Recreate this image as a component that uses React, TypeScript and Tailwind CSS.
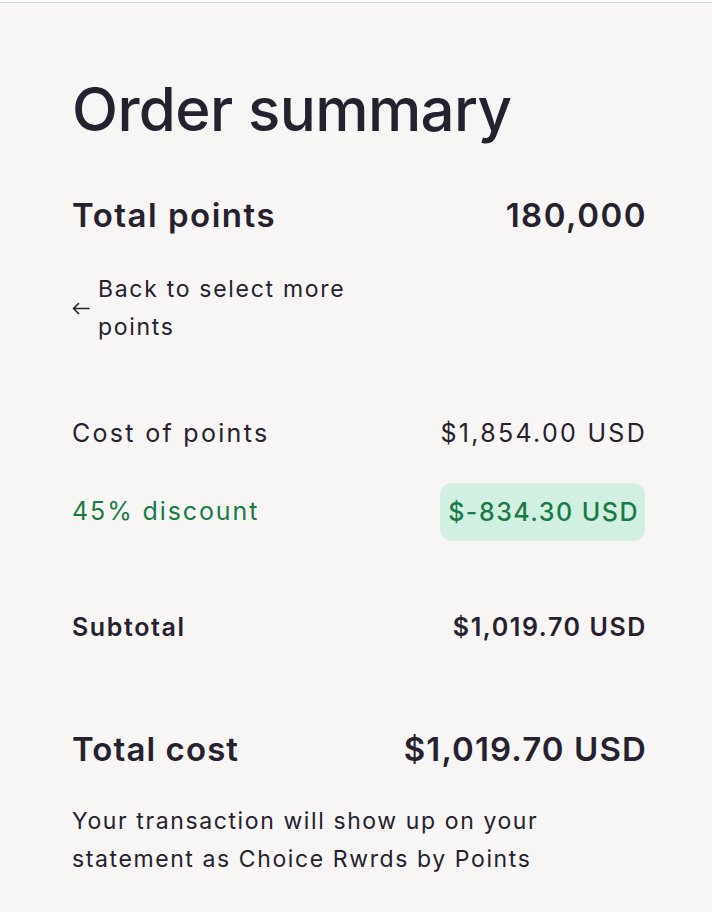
const font = { fontFamily: '"Inter", "Noto Sans", sans-serif' };

function Row({ label, value, className }: { label: string; value: string; className: string }) {
  return (
    <div className={`flex items-center justify-between ${className}`}>
      <span>{label}</span>
      <span>{value}</span>
    </div>
  );
}

export default function App() {
  return (
    <div className="min-h-[912px] bg-[#f7f6f4] text-[#25212f]" style={font}>
      <div className="h-[2px] bg-white" />
      <div className="border-t border-[#d3d8e2] pl-[72px] pr-[65px] pt-[71px] pb-10">
        <h1 className="text-[60px] leading-[70px] font-medium tracking-[-0.6px]">Order summary</h1>

        <Row label="Total points" value="180,000" className="mt-[51px] text-[33px] leading-[40px] font-semibold tracking-[1.5px]" />

        <button className="mt-[35px] flex items-center gap-2 text-left text-[23px] leading-[38px] tracking-[1.7px] text-[#25212f]">
          <svg width="18" height="13" viewBox="0 0 18 13" fill="none" stroke="currentColor" strokeWidth="1.6" strokeLinecap="round" strokeLinejoin="round" className="shrink-0">
            <path d="M17 6.5H1.5M6.5 1.5L1.5 6.5L6.5 11.5" />
          </svg>
          <span className="w-[270px]">Back to select more points</span>
        </button>

        <Row label="Cost of points" value="$1,854.00 USD" className="mt-[70px] text-[25px] leading-[34px] tracking-[2.3px]" />

        <div className="mt-[33px] flex items-center justify-between text-[25px] tracking-[1.9px] text-[#187a45]">
          <span>45% discount</span>
          <span className="mr-[2px] rounded-xl bg-[#d2f0e1] py-[12px] pl-2 pr-[6px] leading-[34px] font-medium tracking-[1.5px]">$-834.30 USD</span>
        </div>

        <Row label="Subtotal" value="$1,019.70 USD" className="mt-[69px] text-[25px] leading-[34px] font-semibold tracking-[1.6px]" />

        <Row label="Total cost" value="$1,019.70 USD" className="mt-[85px] text-[33px] leading-[40px] font-semibold tracking-[1.1px]" />

        <p className="mt-[33px] w-[500px] text-[23px] leading-[38px] tracking-[1.6px]">
          Your transaction will show up on your statement as Choice Rwrds by Points
        </p>
      </div>
    </div>
  );
}
